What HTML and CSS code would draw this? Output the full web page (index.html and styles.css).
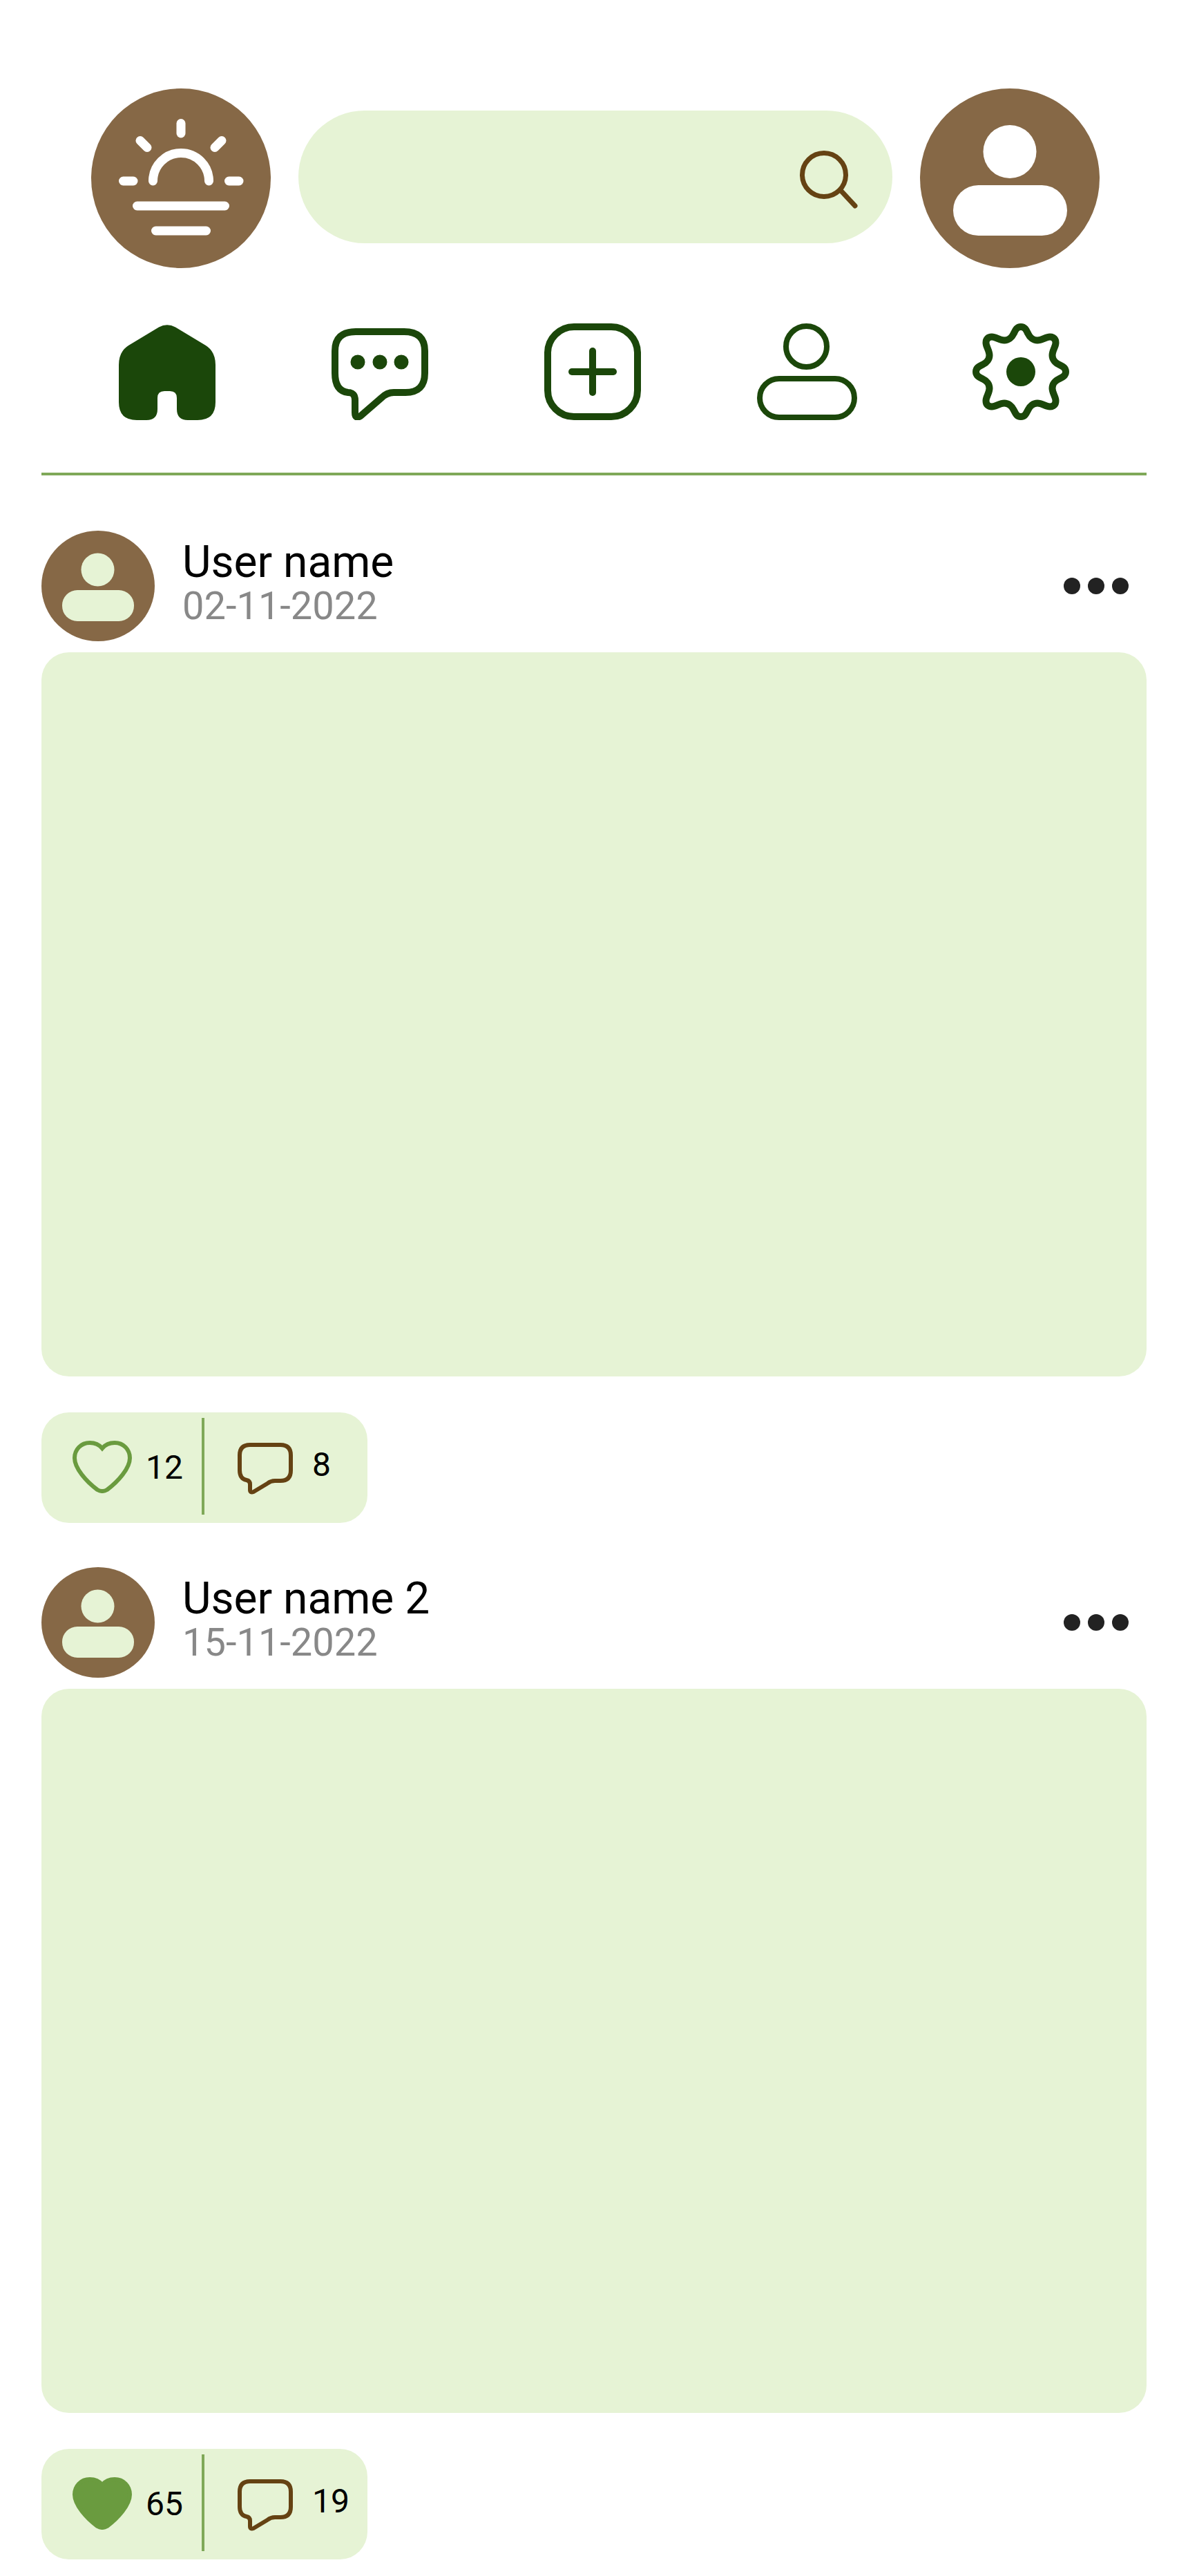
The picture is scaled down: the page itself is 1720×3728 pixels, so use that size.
FILE: index.html
```html
<!DOCTYPE html>
<html>
<head>
  <meta charset="UTF-8">
  <title>Feed</title>
  <link rel="stylesheet" href="styles.css">
</head>
<body>
  <header class="top-bar">
    <div class="round-btn">
      <svg class="fill" viewBox="0 0 260 260" fill="none" stroke="#fff" stroke-width="13" stroke-linecap="round">
        <path d="M130 50.500V65"/>
        <path d="M71 75.500L81 85.500"/>
        <path d="M189 75.500L179 85.500"/>
        <path d="M46.500 134H61"/>
        <path d="M199.500 134H214"/>
        <path d="M89.500 134A40.500 40.500 0 0 1 170.500 134"/>
        <path d="M66.500 170H193.500"/>
        <path d="M93.500 206H166.500"/>
      </svg>
    </div>
    <div class="search">
      <svg class="search-icon" viewBox="0 0 90 90" fill="none" stroke="#654213" stroke-width="7" stroke-linecap="round">
        <circle cx="35" cy="35" r="31.500"/>
        <path d="M60 58.500L80 80"/>
      </svg>
    </div>
    <div class="round-btn">
      <svg class="fill" viewBox="0 0 260 260" fill="#fff">
        <circle cx="130" cy="91.500" r="38.500"/>
        <rect x="48" y="140" width="165" height="73" rx="36.500"/>
      </svg>
    </div>
  </header>

  <nav class="tabs">
    <svg class="tab tab-home" viewBox="0 0 140 138" fill="#1b470a">
      <path d="M58 3.500Q70 -3 82 3.500L126 30Q140 39 140 58V112Q140 138 114 138H100Q84 138 84 122V106Q84 96 74 96H66Q56 96 56 106V122Q56 138 40 138H26Q0 138 0 112V58Q0 39 14 30Z"/>
    </svg>
    <svg class="tab tab-chat" viewBox="0 0 140 133" fill="none" stroke="#1b470a" stroke-width="10" stroke-linejoin="round">
      <path d="M35 5H105Q135 5 135 33V65Q135 93 107 93H90Q80 93 72 101L42 127Q34 132 34 122V104Q34 93 24 93Q5 91 5 65V33Q5 5 35 5Z"/>
      <circle cx="38" cy="49" r="10.500" fill="#1b470a" stroke="none"/>
      <circle cx="70" cy="49" r="10.500" fill="#1b470a" stroke="none"/>
      <circle cx="101" cy="49" r="10.500" fill="#1b470a" stroke="none"/>
    </svg>
    <svg class="tab tab-add" viewBox="0 0 140 140" fill="none" stroke="#1b470a" stroke-width="10" stroke-linecap="round">
      <rect x="5" y="5" width="130" height="130" rx="38"/>
      <path d="M70 40V100"/>
      <path d="M40 70H100"/>
    </svg>
    <svg class="tab tab-person" viewBox="0 0 145 140" fill="none" stroke="#1b470a" stroke-width="8">
      <circle cx="71.500" cy="33.500" r="29.500"/>
      <rect x="4" y="80" width="137" height="56" rx="28"/>
    </svg>
    <svg class="tab tab-gear" viewBox="-70 -70 140 140" fill="none" stroke="#1b470a" stroke-width="10">
      <path d="M0 -65C6 -65 8 -60 10.500 -55C13 -49.500 18 -45.500 24 -45.500C31 -45.500 36 -50.500 42 -50.500C47.500 -50.500 50.500 -47.500 50.500 -42C50.500 -36 45.500 -31 45.500 -24C45.500 -18 49.500 -13 55 -10.500C60 -8 65 -6 65 0C65 6 60 8 55 10.500C49.500 13 45.500 18 45.500 24C45.500 31 50.500 36 50.500 42C50.500 47.500 47.500 50.500 42 50.500C36 50.500 31 45.500 24 45.500C18 45.500 13 49.500 10.500 55C8 60 6 65 0 65C-6 65 -8 60 -10.500 55C-13 49.500 -18 45.500 -24 45.500C-31 45.500 -36 50.500 -42 50.500C-47.500 50.500 -50.500 47.500 -50.500 42C-50.500 36 -45.500 31 -45.500 24C-45.500 18 -49.500 13 -55 10.500C-60 8 -65 6 -65 0C-65 -6 -60 -8 -55 -10.500C-49.500 -13 -45.500 -18 -45.500 -24C-45.500 -31 -50.500 -36 -50.500 -42C-50.500 -47.500 -47.500 -50.500 -42 -50.500C-36 -50.500 -31 -45.500 -24 -45.500C-18 -45.500 -13 -49.500 -10.500 -55C-8 -60 -6 -65 0 -65Z"/>
      <circle r="21" fill="#1b470a" stroke="none"/>
    </svg>
  </nav>

  <main class="feed">
    <article class="post">
      <div class="post-head">
        <svg class="post-avatar" viewBox="0 0 164 160">
          <ellipse cx="82" cy="80" rx="82" ry="80" fill="#866846"/>
          <circle cx="81.500" cy="56.500" r="24" fill="#e6f3d5"/>
          <rect x="30" y="86" width="104" height="45" rx="22" fill="#e6f3d5"/>
        </svg>
        <div class="post-info">
          <div class="post-name">User name</div>
          <div class="post-date">02-11-2022</div>
        </div>
        <div class="more"><span></span><span></span><span></span></div>
      </div>
      <div class="post-image"></div>
      <div class="stats">
        <div class="stat stat-like">
          <svg class="heart" viewBox="0 0 86 76" fill="none" stroke="#6a9b3f" stroke-width="6">
            <path d="M43 11C38 5 32 3 25 3C12 3 3 13 3 25C3 40 20 59 36 71Q43 75 50 71C66 59 83 40 83 25C83 13 74 3 61 3C54 3 48 5 43 11Z"/>
          </svg>
          <span class="count">12</span>
        </div>
        <div class="stat stat-comment">
          <svg class="bubble" viewBox="0 0 80 75" fill="none" stroke="#654213" stroke-width="6" stroke-linejoin="round">
            <path d="M18 3H62Q77 3 77 18V40Q77 55 62 55H54Q48 55 43 59L23 71Q18 73 18 68V60Q18 55 13 54Q3 52 3 40V18Q3 3 18 3Z"/>
          </svg>
          <span class="count">8</span>
        </div>
      </div>
    </article>

    <article class="post">
      <div class="post-head">
        <svg class="post-avatar" viewBox="0 0 164 160">
          <ellipse cx="82" cy="80" rx="82" ry="80" fill="#866846"/>
          <circle cx="81.500" cy="56.500" r="24" fill="#e6f3d5"/>
          <rect x="30" y="86" width="104" height="45" rx="22" fill="#e6f3d5"/>
        </svg>
        <div class="post-info">
          <div class="post-name">User name 2</div>
          <div class="post-date">15-11-2022</div>
        </div>
        <div class="more"><span></span><span></span><span></span></div>
      </div>
      <div class="post-image"></div>
      <div class="stats">
        <div class="stat stat-like">
          <svg class="heart" viewBox="0 0 86 76" fill="#6a9b3f" stroke="#6a9b3f" stroke-width="6">
            <path d="M43 11C38 5 32 3 25 3C12 3 3 13 3 25C3 40 20 59 36 71Q43 75 50 71C66 59 83 40 83 25C83 13 74 3 61 3C54 3 48 5 43 11Z"/>
          </svg>
          <span class="count">65</span>
        </div>
        <div class="stat stat-comment">
          <svg class="bubble" viewBox="0 0 80 75" fill="none" stroke="#654213" stroke-width="6" stroke-linejoin="round">
            <path d="M18 3H62Q77 3 77 18V40Q77 55 62 55H54Q48 55 43 59L23 71Q18 73 18 68V60Q18 55 13 54Q3 52 3 40V18Q3 3 18 3Z"/>
          </svg>
          <span class="count">19</span>
        </div>
      </div>
    </article>
  </main>
</body>
</html>
```

FILE: styles.css
```css
body {
  margin: 0;
  padding: 0 60px;
  background: #fff;
  font-family: Roboto, "Liberation Sans", sans-serif;
  color: #000;
}

/* top row */
.top-bar {
  display: flex;
  align-items: center;
  padding: 128px 68px 0 72px;
  height: 260px;
}
.round-btn {
  width: 260px;
  height: 260px;
  flex: none;
  border-radius: 50%;
  background: #866846;
}
.round-btn .fill {
  display: block;
  width: 100%;
  height: 100%;
}
.search {
  width: 860px;
  height: 192px;
  margin: 0 40px 4px;
  flex: none;
  box-sizing: border-box;
  display: flex;
  align-items: center;
  justify-content: flex-end;
  padding-right: 44px;
  border-radius: 96px;
  background: #e6f3d5;
}
.search-icon {
  width: 90px;
  height: 90px;
  margin-top: 14px;
}

/* nav icons */
.tabs {
  display: flex;
  align-items: flex-end;
  height: 140px;
  margin-top: 80px;
  padding-bottom: 76px;
  border-bottom: 4px solid #7fa858;
}
.tab {
  display: block;
  flex: none;
}
.tab-home { width: 140px; height: 138px; margin-left: 112px; }
.tab-chat { width: 140px; height: 133px; margin-left: 168px; }
.tab-add { width: 140px; height: 140px; margin-left: 168px; }
.tab-person { width: 145px; height: 140px; margin-left: 168px; }
.tab-gear { width: 140px; height: 140px; margin-left: 167px; }

/* posts */
.feed {
  margin-top: 80px;
}
.post {
  margin-bottom: 64px;
}
.post-head {
  display: flex;
  align-items: center;
  height: 160px;
}
.post-avatar {
  width: 164px;
  height: 160px;
  flex: none;
}
.post-info {
  margin-left: 40px;
  padding-bottom: 6px;
  flex: 1;
}
.post-name {
  font-size: 64px;
  line-height: 64px;
}
.post-date {
  font-size: 56px;
  line-height: 62px;
  color: #888;
}
.more {
  display: flex;
  gap: 11px;
  margin-right: 26px;
}
.more span {
  width: 24px;
  height: 24px;
  border-radius: 50%;
  background: #222;
}
.post-image {
  height: 1048px;
  margin-top: 16px;
  border-radius: 40px;
  background: #e6f3d5;
}
.stats {
  display: flex;
  align-items: center;
  width: 472px;
  height: 160px;
  margin-top: 52px;
  border-radius: 40px;
  background: #e6f3d5;
}
.stat {
  display: flex;
  align-items: center;
  box-sizing: border-box;
}
.stat-like {
  width: 236px;
  height: 140px;
  margin-bottom: 4px;
  padding-left: 45px;
  border-right: 4px solid #7fa858;
}
.heart {
  width: 86px;
  height: 76px;
  flex: none;
  margin-top: 2px;
}
.bubble {
  width: 80px;
  height: 75px;
  flex: none;
  margin-top: 3px;
}
.stat-comment {
  padding-left: 48px;
}
.count {
  font-size: 48px;
  line-height: 56px;
}
.stat-like .count {
  margin-left: 20px;
  margin-top: 4px;
}
.stat-comment .count {
  margin-left: 28px;
  margin-top: -8px;
}
```
